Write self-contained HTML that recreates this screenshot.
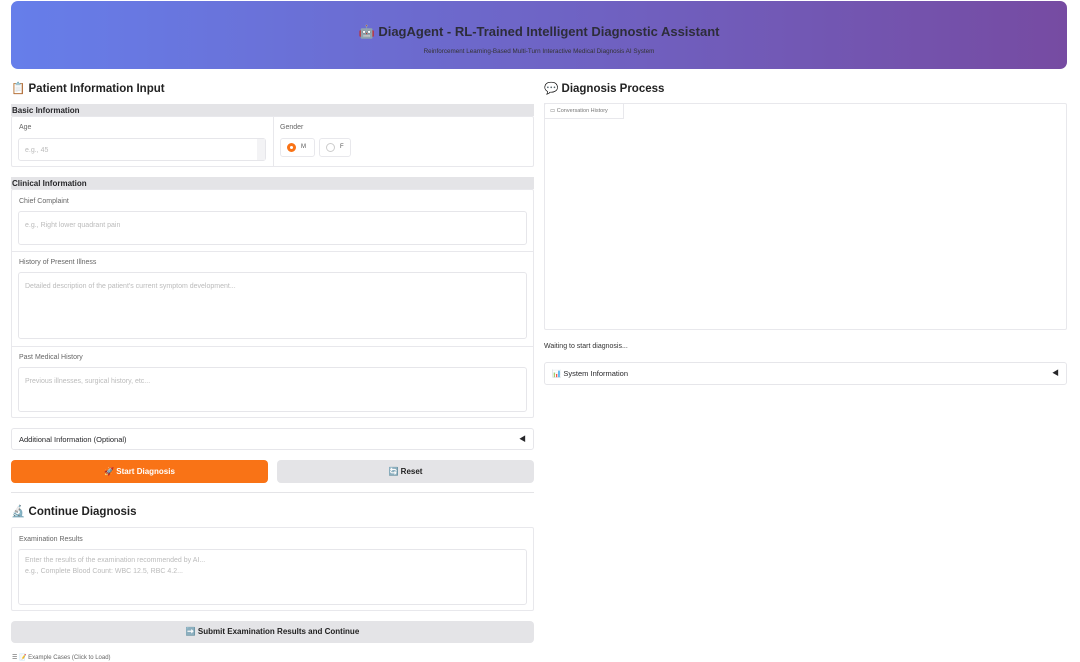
<!DOCTYPE html>
<html><head><meta charset="utf-8"><style>
*{box-sizing:border-box;margin:0;padding:0}
body{width:1080px;height:662px;background:#fff;font-family:"Liberation Sans","Noto Sans CJK SC",sans-serif;color:#27272a;position:relative;overflow:hidden}
.a{position:absolute}
.hdr{left:11px;top:1px;width:1056px;height:68px;border-radius:7px;background:linear-gradient(90deg,#667eea,#764ba2)}
.t{font-weight:bold;font-size:13px;color:#2d2d3a;text-align:center;width:100%;top:23px}
.st{font-size:6.3px;color:#333;text-align:center;width:100%;top:47px}
h2{position:absolute;font-size:11.5px;font-weight:bold;color:#222}
.bar{background:#e4e4e7;font-size:8px;font-weight:bold;padding:2px 1px;height:12px;line-height:9px}
.box{border:1px solid #e8e8ec;border-radius:2px;background:#fff}
.lbl{font-size:7px;color:#666}
.in{border:1px solid #e6e6ea;border-radius:3px;background:#fff;font-size:7px;color:#bbb;padding:8px 6px;line-height:11px}
.btn{border-radius:4px;font-size:8px;font-weight:bold;text-align:center;line-height:23px}
.acc{border:1px solid #e6e6ea;border-radius:3px;font-size:7.5px;padding:0 7px;line-height:21px}
.acc span{float:right;font-size:7px}
</style></head><body>
<div class="a hdr">
<div class="a t">🤖 DiagAgent - RL-Trained Intelligent Diagnostic Assistant</div>
<div class="a st">Reinforcement Learning-Based Multi-Turn Interactive Medical Diagnosis AI System</div>
</div>
<h2 style="left:11px;top:81px">📋 Patient Information Input</h2>
<h2 style="left:544px;top:81px">💬 Diagnosis Process</h2>

<div class="a bar" style="left:11px;top:104px;width:523px">Basic Information</div>
<div class="a box" style="left:11px;top:116px;width:523px;height:51px"></div>
<div class="a" style="left:273px;top:116px;width:1px;height:51px;background:#e8e8ec"></div>
<div class="a lbl" style="left:19px;top:124px">Age</div>
<div class="a in" style="left:18px;top:138px;width:248px;height:23px;padding:6px">e.g., 45</div>
<div class="a" style="left:257px;top:139px;width:8px;height:21px;background:#f3f3f5"></div>
<div class="a lbl" style="left:280px;top:124px">Gender</div>
<div class="a box" style="left:280px;top:138px;width:35px;height:19px;border-radius:3px"></div>
<div class="a" style="left:287px;top:143px;width:9px;height:9px;border-radius:50%;border:3px solid #f97316;background:#fff"></div>
<div class="a" style="left:301px;top:144px;font-size:6px;color:#555;line-height:7px">M</div>
<div class="a box" style="left:319px;top:138px;width:32px;height:19px;border-radius:3px"></div>
<div class="a" style="left:326px;top:143px;width:9px;height:9px;border-radius:50%;border:1px solid #ccc"></div>
<div class="a" style="left:340px;top:144px;font-size:6px;color:#555;line-height:7px">F</div>

<div class="a bar" style="left:11px;top:177px;width:523px">Clinical Information</div>
<div class="a box" style="left:11px;top:189px;width:523px;height:229px"></div>
<div class="a" style="left:12px;top:251px;width:521px;height:1px;background:#e8e8ec"></div>
<div class="a" style="left:12px;top:346px;width:521px;height:1px;background:#e8e8ec"></div>
<div class="a lbl" style="left:19px;top:198px">Chief Complaint</div>
<div class="a in" style="left:18px;top:211px;width:509px;height:34px">e.g., Right lower quadrant pain</div>
<div class="a lbl" style="left:19px;top:259px">History of Present Illness</div>
<div class="a in" style="left:18px;top:272px;width:509px;height:67px">Detailed description of the patient's current symptom development...</div>
<div class="a lbl" style="left:19px;top:354px">Past Medical History</div>
<div class="a in" style="left:18px;top:367px;width:509px;height:45px">Previous illnesses, surgical history, etc...</div>

<div class="a acc" style="left:11px;top:428px;width:523px;height:22px">Additional Information (Optional)<span>◀</span></div>
<div class="a btn" style="left:11px;top:460px;width:257px;height:23px;background:#f97316;color:#fff">🚀 Start Diagnosis</div>
<div class="a btn" style="left:277px;top:460px;width:257px;height:23px;background:#e4e4e7;color:#222">🔄 Reset</div>
<div class="a" style="left:11px;top:492px;width:523px;height:1px;background:#e4e4e7"></div>
<h2 style="left:11px;top:504px">🔬 Continue Diagnosis</h2>
<div class="a box" style="left:11px;top:527px;width:523px;height:84px"></div>
<div class="a lbl" style="left:19px;top:536px">Examination Results</div>
<div class="a in" style="left:18px;top:549px;width:509px;height:56px;padding:5px 6px">Enter the results of the examination recommended by AI...<br>e.g., Complete Blood Count: WBC 12.5, RBC 4.2...</div>
<div class="a btn" style="left:11px;top:621px;width:523px;height:22px;line-height:22px;background:#e4e4e7;color:#222">➡️ Submit Examination Results and Continue</div>
<div class="a" style="left:12px;top:654px;font-size:6px;color:#666">☰ 📝 Example Cases (Click to Load)</div>

<div class="a box" style="left:544px;top:103px;width:523px;height:227px"></div>
<div class="a" style="left:544px;top:103px;width:80px;height:16px;border:1px solid #e8e8ec;font-size:5.5px;color:#777;line-height:14px;padding-left:5px">▭ Conversation History</div>
<div class="a" style="left:544px;top:343px;font-size:7px;color:#333">Waiting to start diagnosis...</div>
<div class="a acc" style="left:544px;top:362px;width:523px;height:23px;line-height:22px">📊 System Information<span>◀</span></div>
</body></html>
